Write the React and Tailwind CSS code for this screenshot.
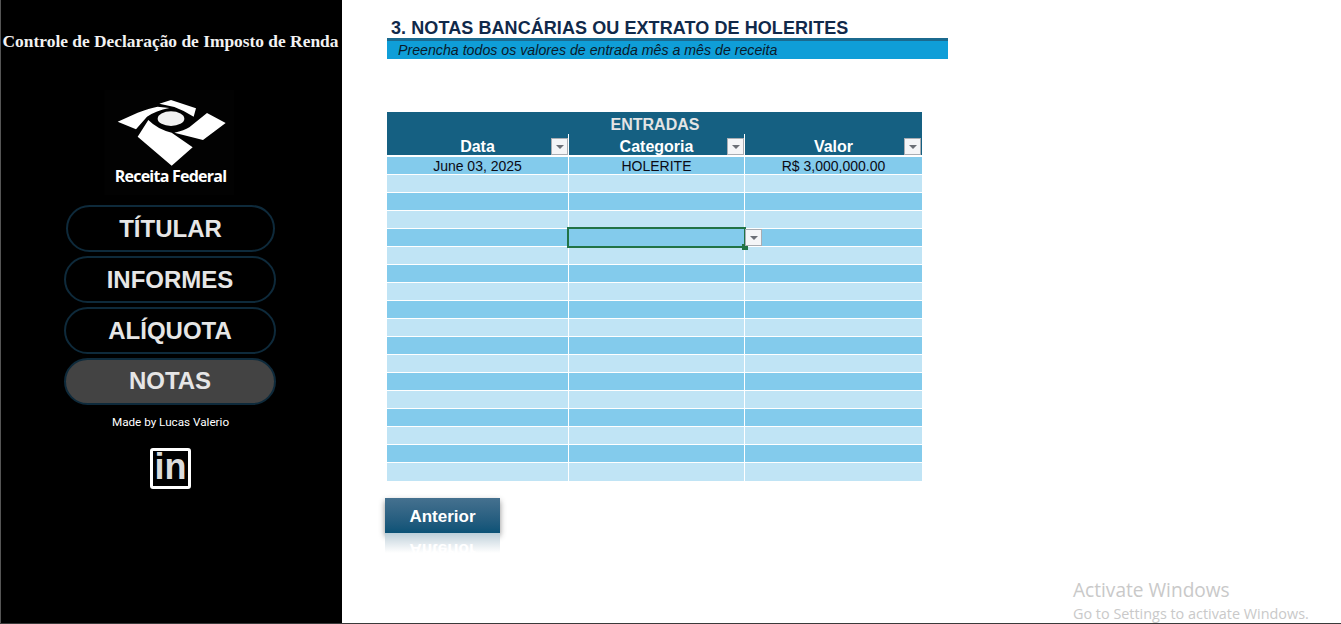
const Arrow = ({ className = "" }) => (
  <div className={"flex items-center justify-center bg-[#f4f5f7] border border-[#a9adb3] " + className}>
    <div className="w-0 h-0 border-l-[4px] border-r-[4px] border-t-[4px] border-l-transparent border-r-transparent border-t-[#6b6f76] mt-[1px]" />
  </div>
);

const Logo = () => (
  <svg width="140" height="105" viewBox="0 0 420 315" className="block">
    <rect x="10" y="0" width="390" height="315" fill="#020202" />
    <path d="M50 95 L110 68 Q145 54 170 50 L205 54 Q165 62 138 80 L105 118 Z" fill="#fff" />
    <path d="M175 41 L210 30 L285 55 L278 80 Q250 62 220 51 Z" fill="#fff" />
    <ellipse cx="210" cy="86" rx="40" ry="22" fill="#f2f2f2" />
    <path d="M318 69 L374 99 L306 150 L220 128 Q250 122 265 112 Z" fill="#fff" />
    <path d="M142 90 Q170 118 212 128 L275 172 L212 227 L110 140 Z" fill="#fff" />
  </svg>
);

const NavButton = ({ label, active, className = "" }) => (
  <div
    className={
      "h-[47px] rounded-[24px] border-[2px] border-[#0e2a3b] flex items-center justify-center font-['Liberation_Sans',sans-serif] font-bold text-[24px] text-[#e6e6e6] " +
      (active ? "bg-[#434343] " : "bg-black ") +
      className
    }
  >
    {label}
  </div>
);

const rows = Array.from({ length: 18 });

export default function App() {
  return (
    <div className="relative w-[1341px] h-[624px] overflow-hidden bg-white flex font-['Liberation_Sans',sans-serif]">
      <aside className="w-[342px] h-[623px] bg-black border-l border-l-[#555555] pr-[2px] flex flex-col items-center shrink-0">
        <h1 className="mt-[31px] h-[20px] leading-[20px] font-['Liberation_Serif',serif] font-bold text-[17.4px] text-[#f2f2f2] whitespace-nowrap">
          Controle de Declaração de Imposto de Renda
        </h1>
        <div className="relative mt-[39px] w-[140px] h-[105px] flex flex-col items-center">
          <Logo />
          <span className="absolute top-[76px] left-0 w-full text-center font-['Open_Sans',sans-serif] font-bold text-[16px] leading-[20px] tracking-[-0.75px] text-white whitespace-nowrap">
            Receita Federal
          </span>
        </div>
        <div className="mt-[10px] w-[213px] flex flex-col items-start gap-[4px]">
          <NavButton label="TÍTULAR" className="w-[209px] ml-[2px]" />
          <NavButton label="INFORMES" className="w-[212px]" />
          <NavButton label="ALÍQUOTA" className="w-[212px]" />
          <NavButton label="NOTAS" active className="w-[212px] pb-[2px]" />
        </div>
        <p className="mt-[9px] h-[16px] leading-[16px] font-['Roboto',sans-serif] text-[11.7px] text-white whitespace-nowrap">
          Made by Lucas Valerio
        </p>
        <div className="mt-[18px] w-[41px] h-[41px] rounded-[3px] border-[3px] border-white flex items-center justify-center">
          <span className="font-['Liberation_Sans',sans-serif] font-bold text-[36px] leading-[36px] text-[#dcdcdc] -mt-[3px]">in</span>
        </div>
      </aside>

      <main className="flex-1 h-[623px] pl-[45px] flex flex-col items-start">
        <h2 className="mt-[18px] ml-[4px] h-[20px] leading-[20px] font-bold text-[18px] tracking-[0.08px] text-[#10294a] whitespace-nowrap">
          3. NOTAS BANCÁRIAS OU EXTRATO DE HOLERITES
        </h2>
        <div className="w-[561px] h-[21px] bg-[#0f9ed8] border-t-[3px] border-t-[#1b6a8f] pl-[11px] leading-[18px] italic text-[14.2px] text-[#0a1a2a]">
          Preencha todos os valores de entrada mês a mês de receita
        </div>

        <section className="relative mt-[53px] w-[535px]">
          <div className="bg-[#156082] h-[43px] text-[#ffffff]">
            <div className="h-[22px] pt-[3px] text-center text-[16px] leading-[20px] font-bold text-[#e4e4e4] pl-[1px]">ENTRADAS</div>
            <div className="grid grid-cols-[181px_175px_177px] gap-x-px h-[21px]">
              <div className="relative text-center text-[16px] leading-[22px] pt-[2px] font-bold border-r border-r-white -mr-px">
                <span className="block">Data</span>
                <Arrow className="absolute right-0 top-[4px] w-[17px] h-[17px]" />
              </div>
              <div className="relative text-center text-[16px] leading-[22px] pt-[2px] font-bold border-r border-r-white -mr-px">
                <span className="block">Categoria</span>
                <Arrow className="absolute right-0 top-[4px] w-[17px] h-[17px]" />
              </div>
              <div className="relative text-center text-[16px] leading-[22px] pt-[2px] font-bold">
                <span className="block">Valor</span>
                <Arrow className="absolute right-[1px] top-[4px] w-[17px] h-[17px]" />
              </div>
            </div>
          </div>
          <div className="flex flex-col">
            {rows.map((_, i) => (
              <div
                key={i}
                className={
                  "grid grid-cols-[181px_175px_177px] gap-x-px text-[14px] leading-[17px] text-center text-[#0a0a14] " +
                  (i === 0 ? "h-[19px] border-t-[2px] border-t-white " : i === 17 ? "h-[19px] border-t border-t-white " : "h-[18px] border-t border-t-white ") +
                  (i % 2 === 0 ? "bg-[#83cbec]" : "bg-[#c0e4f5]")
                }
              >
                <div className={"border-r border-r-white -mr-px " + (i === 0 ? "pt-px" : "")}>{i === 0 ? "June 03, 2025" : ""}</div>
                <div className={"border-r border-r-white -mr-px " + (i === 0 ? "pt-px" : "")}>{i === 0 ? "HOLERITE" : ""}</div>
                <div className={i === 0 ? "pt-px" : ""}>{i === 0 ? "R$ 3,000,000.00" : ""}</div>
              </div>
            ))}
          </div>
          <div className="absolute left-[180px] top-[115px] w-[179px] h-[21px] border-[2px] border-[#217346]" />
          <div className="absolute left-[355px] top-[132px] w-[6px] h-[6px] bg-[#217346]" />
          <Arrow className="absolute left-[358px] top-[117px] w-[17px] h-[17px]" />
        </section>

        <div className="mt-[17px] -ml-[2px] w-[115px]">
          <div className="h-[35px] bg-gradient-to-b from-[#45718f] to-[#0a5276] shadow-[0_3px_6px_rgba(0,0,0,0.45)] flex items-center justify-center text-[17px] font-bold text-white">
            <span className="mt-[2px]">Anterior</span>
          </div>
          <div className="relative h-[20px] overflow-hidden">
            <div className="h-[35px] -scale-y-100 bg-gradient-to-b from-[#45718f] to-[#0a5276] flex items-center justify-center text-[17px] font-bold text-white">
              <span className="mt-[2px]">Anterior</span>
            </div>
            <div className="absolute inset-0 bg-gradient-to-b from-[rgba(255,255,255,0.72)] to-white" />
          </div>
        </div>
      </main>

      <div className="absolute left-[1073px] top-[578px] font-['Open_Sans',sans-serif] text-[#c9c9c9] whitespace-nowrap">
        <div className="text-[19.1px] leading-[25px]">Activate Windows</div>
        <div className="text-[14.4px] leading-[19px] mt-[1px]">Go to Settings to activate Windows.</div>
      </div>
      <div className="absolute left-0 bottom-0 w-full h-px bg-[#3a3a3a]" />
    </div>
  );
}
